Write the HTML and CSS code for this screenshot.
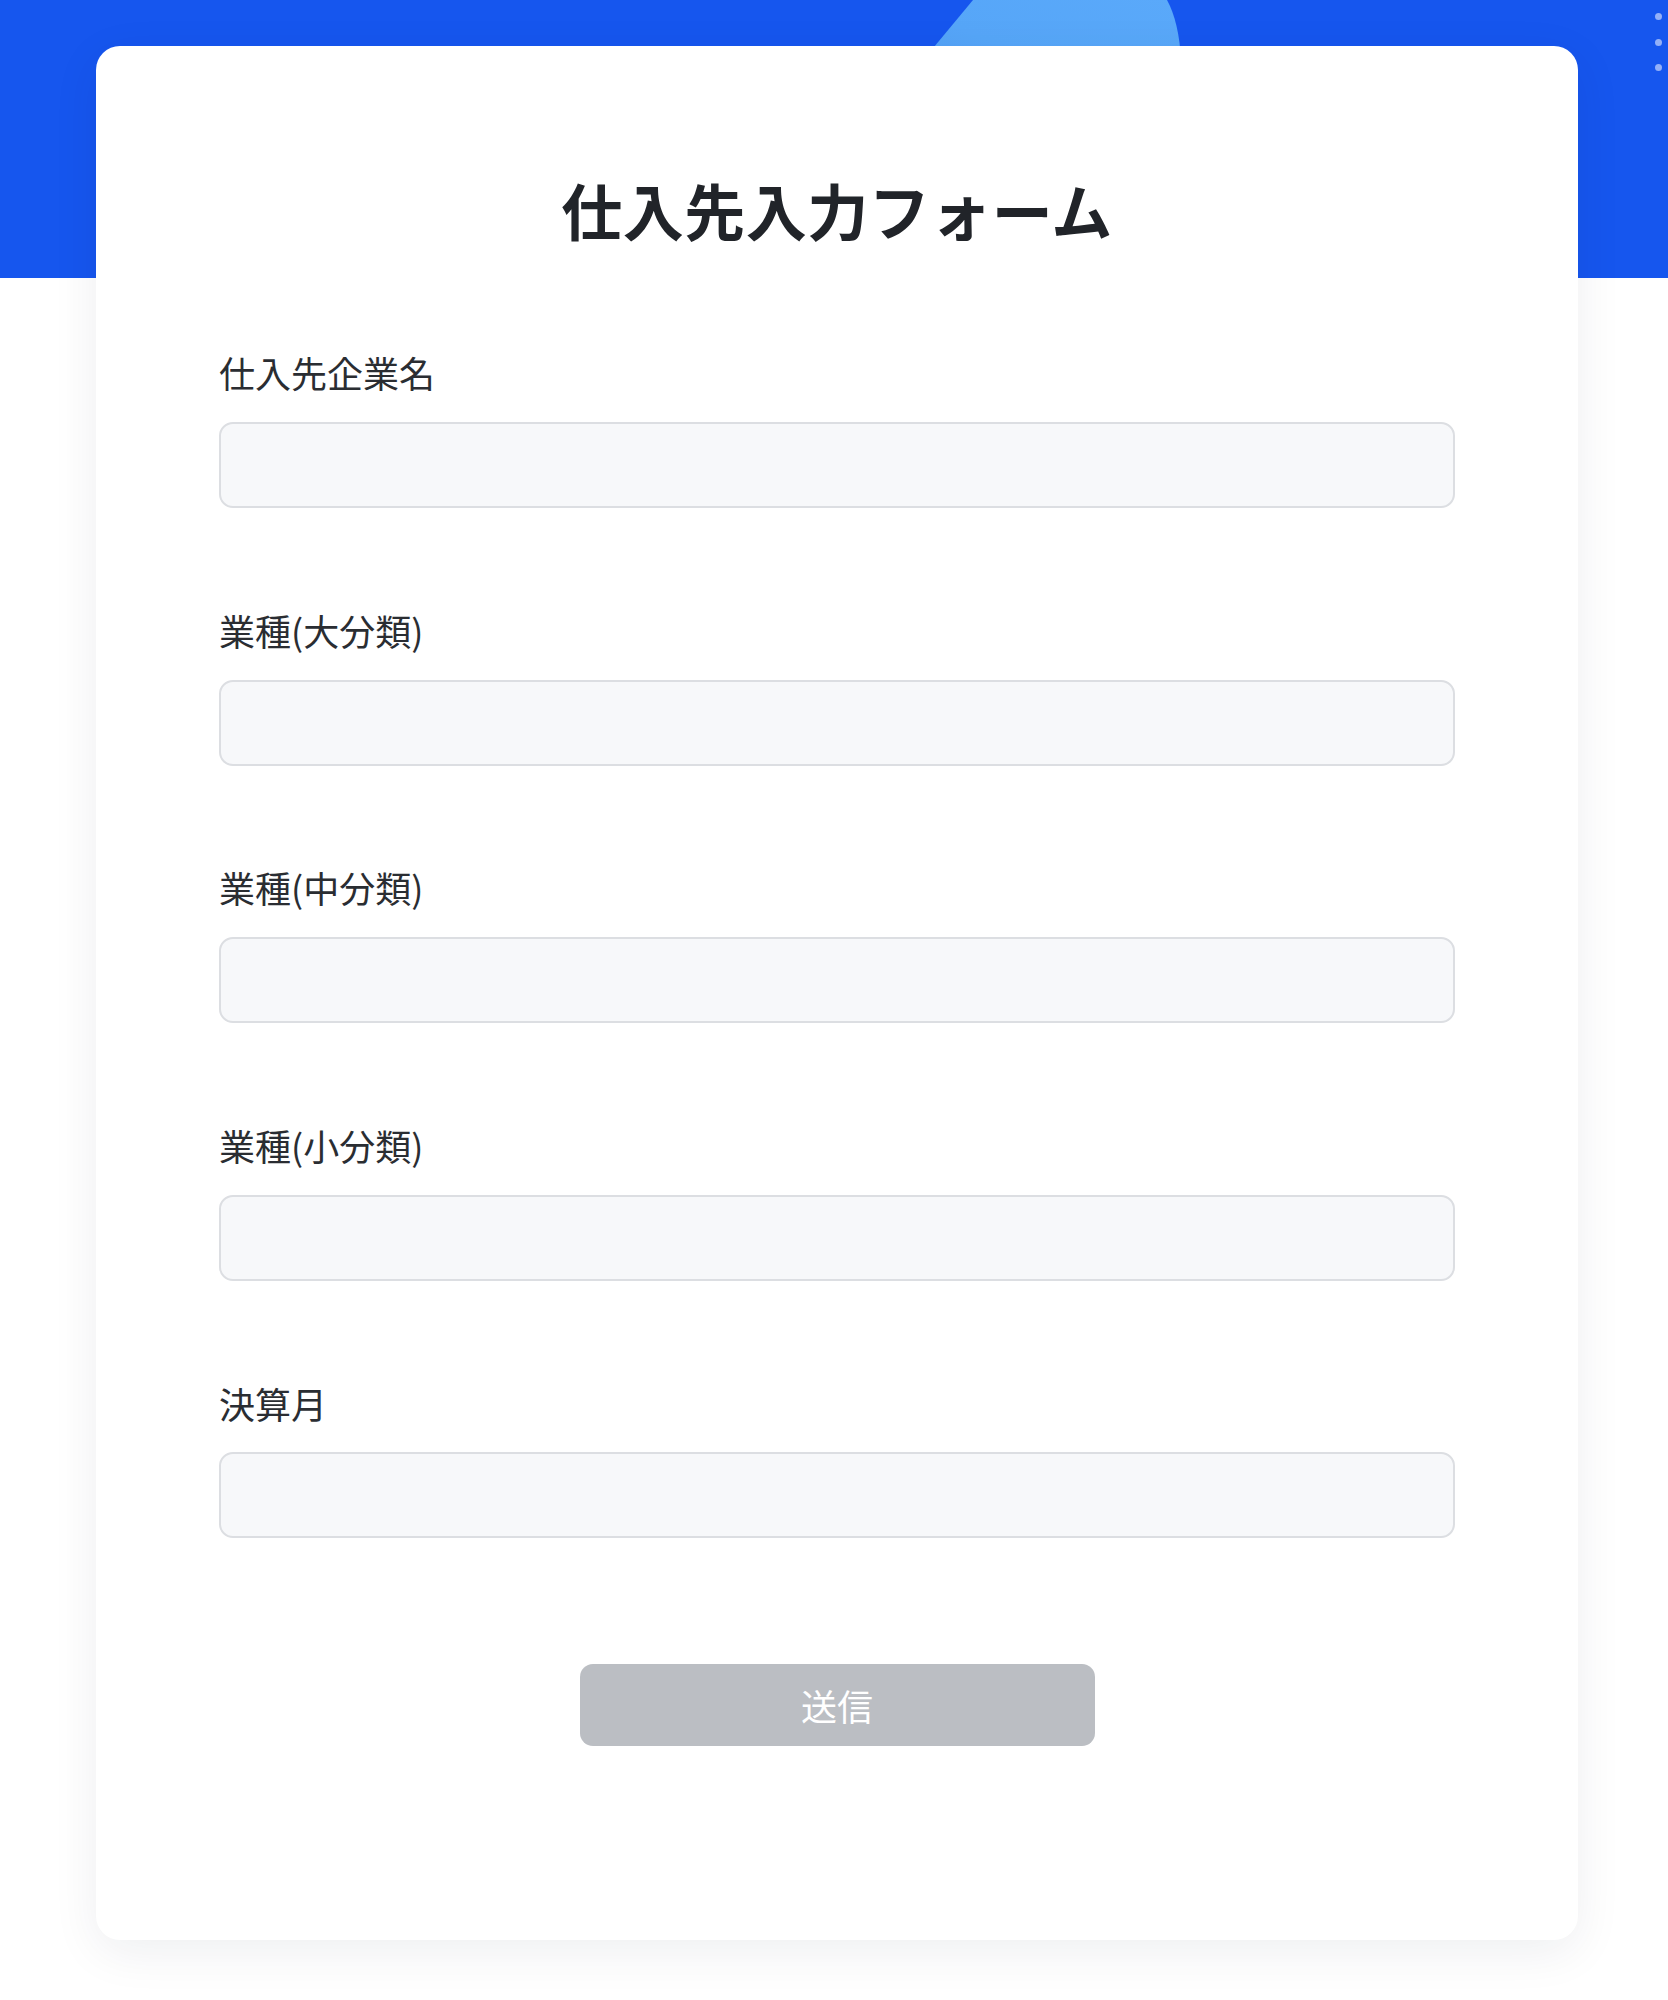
FILE: index.html
```html
<!DOCTYPE html>
<html lang="ja">
<head>
<meta charset="utf-8">
<title>仕入先入力フォーム</title>
<link rel="stylesheet" href="styles.css">
</head>
<body>
<div class="page">
  <header class="hero">
    <svg class="hero-shape" width="320" height="120" viewBox="0 0 320 120" aria-hidden="true">
      <defs>
        <linearGradient id="g1" x1="0" y1="1" x2="1" y2="0">
          <stop offset="0" stop-color="#4b98f3"/>
          <stop offset="0.5" stop-color="#56a6f8"/>
          <stop offset="1" stop-color="#5aa9fa"/>
        </linearGradient>
      </defs>
      <path d="M-10 100 L73 0 L267 0 Q279 22 281 60 L281 120 L-10 120 Z" fill="url(#g1)"/>
    </svg>
    <div class="hero-dots">
      <span class="dot"></span>
      <span class="dot"></span>
      <span class="dot"></span>
    </div>
  </header>
  <main class="card">
    <h1 class="title">仕入先入力フォーム</h1>
    <form class="form">
      <div class="field">
        <label class="label" for="f1">仕入先企業名</label>
        <input class="input" id="f1" type="text">
      </div>
      <div class="field">
        <label class="label" for="f2">業種(大分類)</label>
        <input class="input" id="f2" type="text">
      </div>
      <div class="field">
        <label class="label" for="f3">業種(中分類)</label>
        <input class="input" id="f3" type="text">
      </div>
      <div class="field">
        <label class="label" for="f4">業種(小分類)</label>
        <input class="input" id="f4" type="text">
      </div>
      <div class="field">
        <label class="label" for="f5">決算月</label>
        <input class="input" id="f5" type="text">
      </div>
      <div class="actions">
        <button class="submit" type="button" disabled>送信</button>
      </div>
    </form>
  </main>
</div>
</body>
</html>
```

FILE: styles.css
```css
* {
  box-sizing: border-box;
}

html, body {
  margin: 0;
  padding: 0;
  background: #ffffff;
}

body {
  font-family: "Noto Sans CJK JP", "Noto Sans", sans-serif;
  color: #25282d;
}

.page {
  width: 1668px;
  min-height: 2000px;
  overflow: hidden;
  background: #ffffff;
}

.hero {
  position: relative;
  height: 278px;
  background: #1656ee;
  overflow: hidden;
}

.hero-shape {
  position: absolute;
  left: 900px;
  top: 0;
}

.hero-dots {
  position: absolute;
  left: 1655px;
  top: 13px;
  display: flex;
  flex-direction: column;
  gap: 18.5px;
}

.dot {
  display: block;
  width: 7px;
  height: 7px;
  border-radius: 50%;
  background: #93b0f8;
}

.card {
  position: relative;
  z-index: 1;
  width: 1482px;
  margin: -232px 0 0 96px;
  padding: 128px 123px 194px;
  background: #ffffff;
  border-radius: 24px;
  box-shadow: 0 12px 48px rgba(20, 30, 50, 0.07);
}

.title {
  margin: 0;
  font-size: 61px;
  line-height: 72px;
  font-weight: 700;
  text-align: center;
  color: #212429;
  letter-spacing: 0.5px;
}

.form {
  margin-top: 101.3px;
  display: flex;
  flex-direction: column;
  gap: 96.8px;
}

.field {
  display: flex;
  flex-direction: column;
}

.label {
  font-size: 36px;
  line-height: 50px;
  font-weight: 400;
  color: #2a2d32;
  margin-bottom: 24.8px;
}

.input {
  display: block;
  width: 100%;
  height: 86px;
  border: 2px solid #dcdee2;
  border-radius: 14px;
  background: #f7f8fa;
  font-family: inherit;
  font-size: 32px;
  padding: 0 24px;
  outline: none;
}

.actions {
  display: flex;
  justify-content: center;
  margin-top: 28.5px;
}

.submit {
  width: 515px;
  height: 82px;
  border: none;
  border-radius: 13px;
  background: #bbbec3;
  color: #ffffff;
  font-family: inherit;
  font-size: 36px;
  line-height: 1;
  padding: 0;
}
```
